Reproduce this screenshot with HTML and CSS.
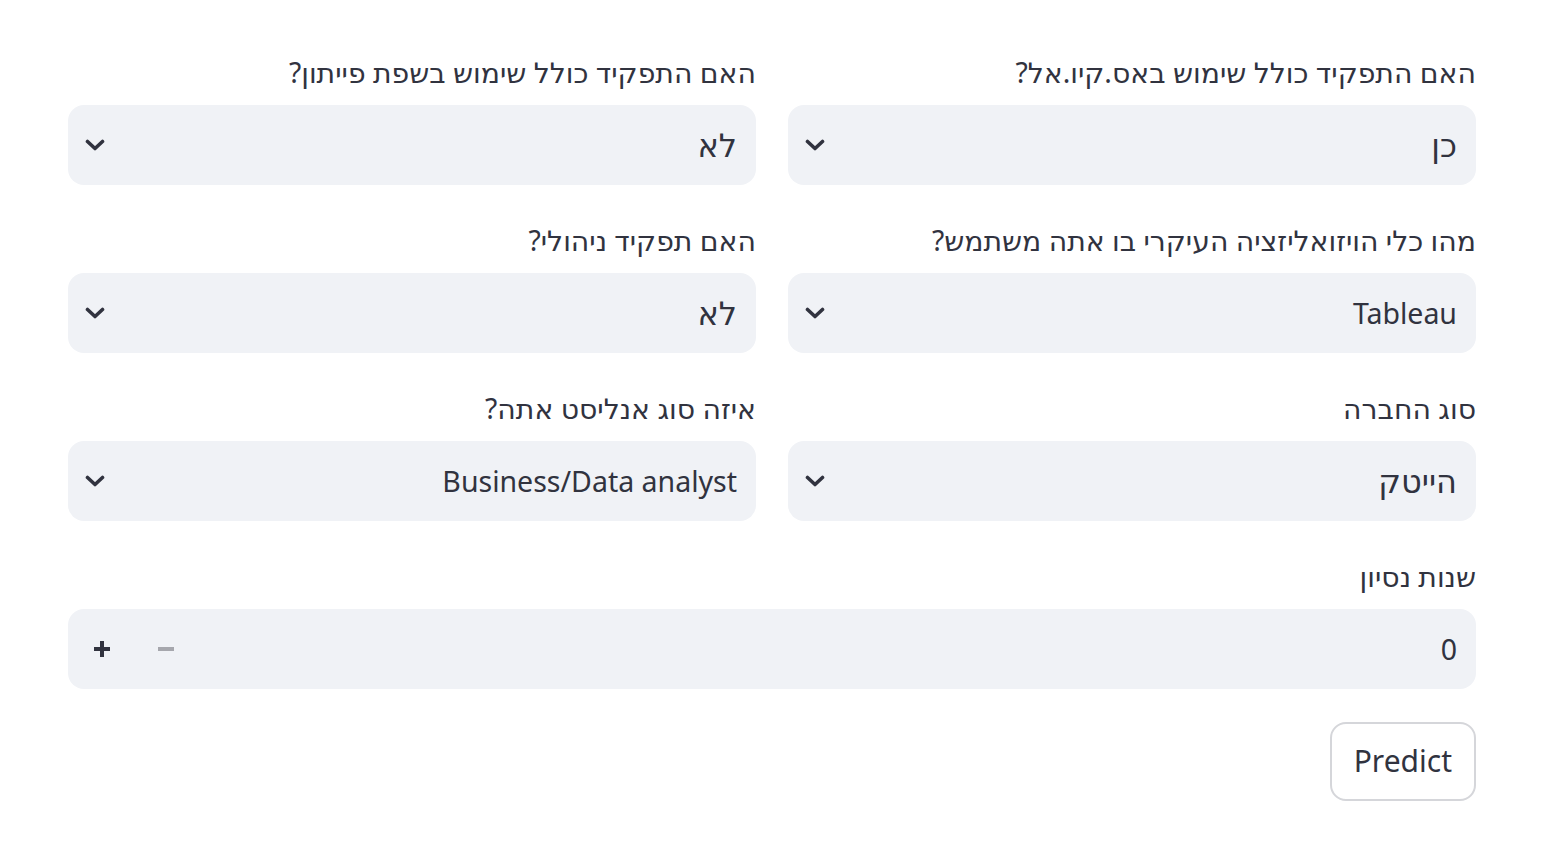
FILE: index.html
```html
<!DOCTYPE html>
<html lang="he" dir="rtl">
<head>
  <meta charset="UTF-8" />
  <title>Predict</title>
  <link rel="stylesheet" href="styles.css">
</head>
<body>

  <div class="form">
    <div class="field-grid">

      <div class="field">
        <label class="field-label">האם התפקיד כולל שימוש באס.קיו.אל?</label>
        <div class="select">
          <span class="select-value">כן</span>
          <svg class="chevron" width="20" height="12" viewBox="0 0 20 12"><polyline points="2.5,2.5 10,9.5 17.5,2.5" /></svg>
        </div>
      </div>

      <div class="field">
        <label class="field-label">האם התפקיד כולל שימוש בשפת פייתון?</label>
        <div class="select">
          <span class="select-value">לא</span>
          <svg class="chevron" width="20" height="12" viewBox="0 0 20 12"><polyline points="2.5,2.5 10,9.5 17.5,2.5" /></svg>
        </div>
      </div>

      <div class="field">
        <label class="field-label">מהו כלי הויזואליזציה העיקרי בו אתה משתמש?</label>
        <div class="select">
          <span class="select-value latin">Tableau</span>
          <svg class="chevron" width="20" height="12" viewBox="0 0 20 12"><polyline points="2.5,2.5 10,9.5 17.5,2.5" /></svg>
        </div>
      </div>

      <div class="field">
        <label class="field-label">האם תפקיד ניהולי?</label>
        <div class="select">
          <span class="select-value">לא</span>
          <svg class="chevron" width="20" height="12" viewBox="0 0 20 12"><polyline points="2.5,2.5 10,9.5 17.5,2.5" /></svg>
        </div>
      </div>

      <div class="field">
        <label class="field-label">סוג החברה</label>
        <div class="select">
          <span class="select-value">הייטק</span>
          <svg class="chevron" width="20" height="12" viewBox="0 0 20 12"><polyline points="2.5,2.5 10,9.5 17.5,2.5" /></svg>
        </div>
      </div>

      <div class="field">
        <label class="field-label">איזה סוג אנליסט אתה?</label>
        <div class="select">
          <span class="select-value latin" dir="ltr">Business/Data analyst</span>
          <svg class="chevron" width="20" height="12" viewBox="0 0 20 12"><polyline points="2.5,2.5 10,9.5 17.5,2.5" /></svg>
        </div>
      </div>

      <!-- Number input spans both columns -->
      <div class="field field-wide">
        <label class="field-label">שנות נסיון</label>
        <div class="number-input">
          <span class="select-value latin">0</span>
          <div class="step-buttons">
            <span class="step step-minus">
              <svg width="16" height="16" viewBox="0 0 16 16"><line x1="0" y1="8" x2="16" y2="8" /></svg>
            </span>
            <span class="step step-plus">
              <svg width="16" height="16" viewBox="0 0 16 16"><line x1="0" y1="8" x2="16" y2="8" /><line x1="8" y1="0" x2="8" y2="16" /></svg>
            </span>
          </div>
        </div>
      </div>

    </div>

    <div class="actions">
      <button class="predict-btn">Predict</button>
    </div>
  </div>

</body>
</html>
```

FILE: styles.css
```css
body {
  margin: 0;
  font-family: "Noto Sans", "DejaVu Sans", sans-serif;
  color: #31333f;
  background: #ffffff;
}

.form {
  padding: 52px 66px 0 68px;
}

.field-grid {
  display: grid;
  grid-template-columns: 1fr 1fr;
  column-gap: 32px;
  row-gap: 35px;
}

.field-wide {
  grid-column: 1 / span 2;
}

.field-label {
  display: block;
  font-size: 28.3px;
  line-height: 40px;
  height: 40px;
  margin-bottom: 13px;
  white-space: nowrap;
}

.select,
.number-input {
  height: 80px;
  background: #f0f2f6;
  border-radius: 16px;
  display: flex;
  align-items: center;
  justify-content: space-between;
  padding: 0 19px 0 17px;
  box-sizing: border-box;
}

.select-value {
  font-size: 32px;
  line-height: 40px;
}

.select-value.latin {
  font-size: 28.5px;
}

.chevron polyline {
  fill: none;
  stroke: #31333f;
  stroke-width: 3.6;
  stroke-linecap: round;
  stroke-linejoin: round;
}

/* steppers sit on the left in rtl */
.number-input {
  padding-left: 2px;
}

.step-buttons {
  display: flex;
  direction: ltr;
  flex-direction: row-reverse;
}

.step {
  width: 64px;
  height: 80px;
  display: flex;
  align-items: center;
  justify-content: center;
}

.step line {
  stroke-width: 4;
}

.step-plus line {
  stroke: #31333f;
}

.step-minus line {
  stroke: #a6a7ad;
}

.actions {
  display: flex;
  justify-content: flex-start;
  margin-top: 33px;
}

.predict-btn {
  font-family: inherit;
  font-size: 30px;
  color: #31333f;
  background: #ffffff;
  border: 2px solid #d5d6da;
  border-radius: 16px;
  height: 79px;
  padding: 0 22px 2px;
  cursor: pointer;
}
```
